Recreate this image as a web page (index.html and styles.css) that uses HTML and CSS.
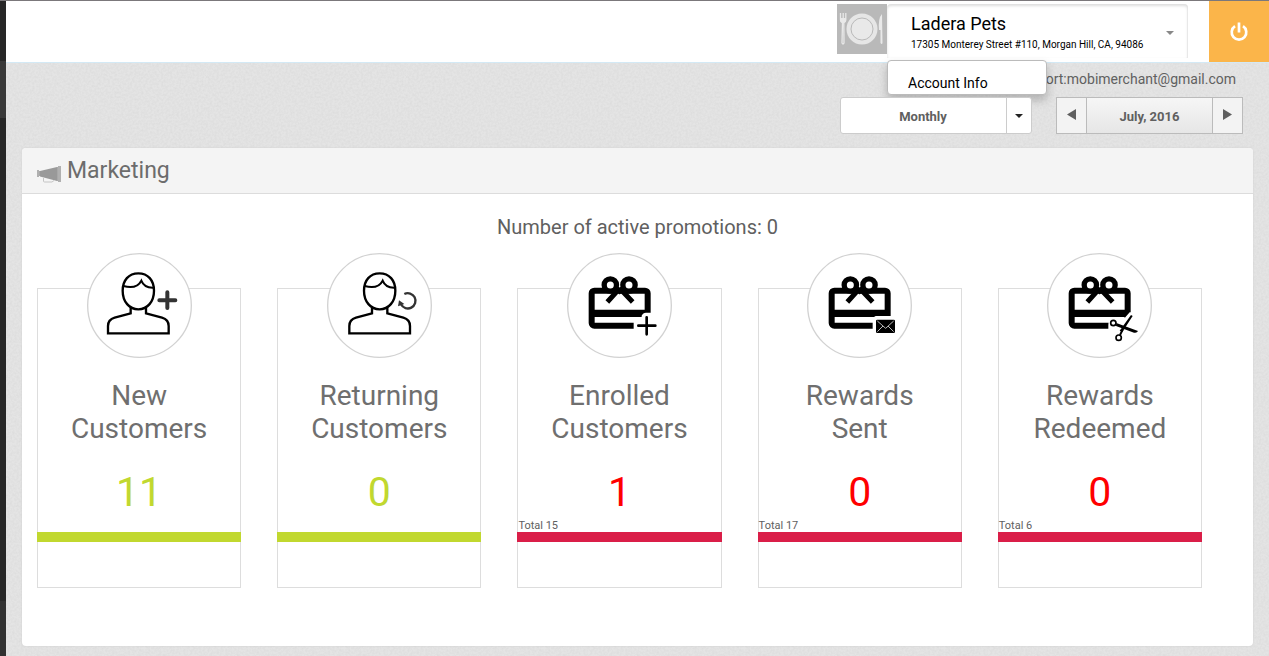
FILE: index.html
```html
<!DOCTYPE html>
<html lang="en">
<head>
<meta charset="utf-8">
<title>Ladera Pets - Marketing</title>
<link rel="stylesheet" href="styles.css">
</head>
<body>
<svg class="sprites" aria-hidden="true">
  <defs>
    <g id="ring"><circle cx="178.500" cy="181.500" r="155.500" fill="#fff" stroke="#d2d2d2" stroke-width="4"/></g>
    <g id="person" fill="none" stroke="#000" stroke-width="7">
      <path d="M175 85C146 85 128 106 128 137c0 33 20 56 47 56s47-23 47-56c0-31-18-52-47-52z"/>
      <path d="M130 123c21 6 43 5 54-16 5 13 17 22 37 21" stroke-width="6"/>
      <path d="M152 186v19l-48 13c-14 4-20 14-20 25v22h182v-22c0-11-6-21-20-25l-48-13v-19"/>
    </g>
    <g id="gift">
      <rect x="95" y="137" width="168" height="105" rx="8" fill="none" stroke="#000" stroke-width="18"/>
      <path d="M90 194h178v22H90z"/>
      <circle cx="151" cy="120" r="18.500" fill="#fff" stroke="#000" stroke-width="16"/>
      <circle cx="207" cy="120" r="18.500" fill="#fff" stroke="#000" stroke-width="16"/>
      <path d="M166 126l13 12 13-12M179 130l-37 41M179 130l39 41" fill="none" stroke="#000" stroke-width="15"/>
    </g>
  </defs>
</svg>
<div class="app">
  <aside class="rail"><div class="rail-active"></div><div class="rail-foot"></div></aside>
  <div class="page">
    <header class="topbar">
      <svg class="logo" viewBox="0 0 50 50" role="img" aria-label="Business logo">
        <rect width="50" height="50" fill="#b9b9b9"/>
        <circle cx="25" cy="25" r="15.500" fill="#e6e6e6"/>
        <circle cx="25" cy="25" r="11" fill="#e9e9e9" stroke="#b9b9b9"/>
        <path d="M3.500 9v7q0 2 2 2.500L5 39q1 2 2 0L6.800 18.500q2-.5 2-2.500V9M6.200 9v8" fill="none" stroke="#e9e9e9" stroke-width="1.300"/>
        <path d="M3 14h6v3l-2 2H5l-2-2zM45 10q-4 4-3 16h1.500v13q1.500 2 2 0z" fill="#e9e9e9"/>
      </svg>
      <div class="account">
        <button class="account-toggle" type="button" aria-haspopup="true" aria-expanded="true">
          <span class="account-text">
            <span class="account-name">Ladera Pets</span>
            <span class="account-address">17305 Monterey Street #110, Morgan Hill, CA, 94086</span>
          </span>
          <span class="caret caret-light"></span>
        </button>
        <nav class="account-menu"><a href="#account">Account Info</a></nav>
      </div>
      <button class="power" type="button" aria-label="Log out">
        <svg viewBox="0 0 20 20" width="20" height="20" fill="none" stroke="#fff" stroke-width="2.700">
          <path d="M6 4.200a7.300 7.300 0 1 0 8 0M10 .5v10"/>
        </svg>
      </button>
    </header>
    <main class="content">
      <p class="support">Support:<a href="mailto:mobimerchant@gmail.com">mobimerchant@gmail.com</a></p>
      <div class="filters">
        <div class="period">
          <select aria-label="Period"><option>Monthly</option><option>Weekly</option><option>Daily</option></select>
          <span class="period-arrow"><span class="caret"></span></span>
        </div>
        <div class="pager">
          <button type="button" aria-label="Previous month"><svg viewBox="0 0 9 11" width="9" height="11"><path d="M9 0v11L0 5.500z" fill="#5f5f5f"/></svg></button>
          <span class="pager-label">July, 2016</span>
          <button type="button" aria-label="Next month"><svg viewBox="0 0 9 11" width="9" height="11"><path d="M0 0v11l9-5.500z" fill="#5f5f5f"/></svg></button>
        </div>
      </div>
      <section class="panel">
        <div class="panel-head">
          <svg viewBox="0 0 24 18" width="24" height="18" aria-hidden="true">
            <path d="M3 6l17-4v14L3 11.500z" fill="#999"/>
            <path d="M0 5h2v7H0zM21 1h3v16h-3z" fill="#b0b0b0"/>
            <path d="M2 6h1v5H2zM20 2h1v14h-1z" fill="#a8a8a8"/>
            <path d="M6.500 13v3q0 1 1 1h7.500l2-1.500" fill="none" stroke="#c4c4c4"/>
          </svg>
          <h1>Marketing</h1>
        </div>
        <p class="promotions">Number of active promotions: 0</p>
        <div class="cards">
          <article class="card card-green">
            <svg class="badge" viewBox="21 24 315 315" aria-hidden="true"><use href="#ring"/><use href="#person"/>
              <path d="M262 142v47M238 165.500h48" stroke="#333" stroke-width="12" stroke-linecap="round"/></svg>
            <h2>New<br>Customers</h2>
            <p class="value">11</p>
            <p class="total"></p>
            <div class="bar"></div>
          </article>
          <article class="card card-green">
            <svg class="badge" viewBox="21 24 315 315" aria-hidden="true"><use href="#ring"/><use href="#person" x="4"/>
              <path d="M253 147a23 23 0 1 1-10 31" fill="none" stroke="#333" stroke-width="7"/><path d="M234 184l3-18 16 11z" fill="#333"/></svg>
            <h2>Returning<br>Customers</h2>
            <p class="value">0</p>
            <p class="total"></p>
            <div class="bar"></div>
          </article>
          <article class="card card-red">
            <svg class="badge" viewBox="21 24 315 315" aria-hidden="true"><use href="#ring"/><use href="#gift"/>
              <path d="M221 280v-60h24v-8q4-9 13-9h30v77z" fill="#fff"/>
              <path d="M260 217v51M235 242h51" stroke="#000" stroke-width="8" stroke-linecap="round"/></svg>
            <h2>Enrolled<br>Customers</h2>
            <p class="value">1</p>
            <p class="total">Total 15</p>
            <div class="bar"></div>
          </article>
          <article class="card card-red">
            <svg class="badge" viewBox="21 24 315 315" aria-hidden="true"><use href="#ring"/><use href="#gift"/>
              <path d="M218 270v-54h4l5-3h63v57z" fill="#fff"/>
              <rect x="228" y="224" width="57" height="40" rx="4"/>
              <path d="M232 228l25 22 24-22M232 260l17-17M281 260l-17-17" fill="none" stroke="#bbb" stroke-width="3"/></svg>
            <h2>Rewards<br>Sent</h2>
            <p class="value">0</p>
            <p class="total">Total 17</p>
            <div class="bar"></div>
          </article>
          <article class="card card-red">
            <svg class="badge" viewBox="21 24 315 315" aria-hidden="true"><use href="#ring"/><use href="#gift"/>
              <path d="M205 256v-15q-2-19 15-22h34l15-17h20v60z" fill="#fff"/>
              <path d="M273 210l5 3-31 48-8-4zM229 234l65 24q-3 7-12 5l-54-20z"/>
              <circle cx="220" cy="234" r="8" fill="#fff" stroke="#000" stroke-width="5"/>
              <circle cx="236" cy="278" r="8" fill="#fff" stroke="#000" stroke-width="5"/>
              <path d="M240 270l8-16" stroke="#000" stroke-width="6"/></svg>
            <h2>Rewards<br>Redeemed</h2>
            <p class="value">0</p>
            <p class="total">Total 6</p>
            <div class="bar"></div>
          </article>
        </div>
      </section>
    </main>
  </div>
</div>
</body>
</html>
```

FILE: styles.css
```css
* { box-sizing: border-box; }
body {
  margin: 0;
  font-family: Roboto, "Liberation Sans", sans-serif;
  font-size: 14px;
  color: #606060;
}
h1, h2, p { margin: 0; font-weight: 400; }
button { padding: 0; border: 0; font: inherit; color: inherit; cursor: pointer; }
a { color: inherit; text-decoration: none; }
.sprites { position: absolute; width: 0; height: 0; }

.app { display: flex; min-height: 100vh; border-top: 1px solid #7b787b; }
.rail { display: flex; flex-direction: column; justify-content: space-between; width: 6px; padding-top: 60px; background: #272727; }
.rail-active { height: 57px; background: #393939; }
.rail-foot { height: 55px; background: #313131; }
.page {
  flex: 1;
  background-color: #e4e4e4;
  background-image: url("data:image/svg+xml,%3Csvg xmlns='http://www.w3.org/2000/svg' width='200' height='200'%3E%3Cfilter id='n'%3E%3CfeTurbulence type='fractalNoise' baseFrequency='.45' numOctaves='2' stitchTiles='stitch'/%3E%3CfeColorMatrix values='0 0 0 0 0 0 0 0 0 0 0 0 0 0 0 .07 0 0 0 -.025'/%3E%3C/filter%3E%3Crect width='200' height='200' filter='url(%23n)'/%3E%3C/svg%3E");
}

.topbar { display: flex; justify-content: flex-end; background: #fff; border-bottom: 1px solid #d3e9f5; }
.logo { width: 50px; height: 50px; margin-top: 3px; }
.account { position: relative; width: 301px; margin: 3px 21px 4px 0; }
.account-toggle {
  display: flex;
  align-items: center;
  justify-content: space-between;
  width: 100%;
  height: 54px;
  padding: 3px 14px 0 24px;
  background: #fff;
  border-radius: 4px 4px 0 0;
  box-shadow: inset 0 2px 3px #ddd, inset -1px 0 1px #eee;
  color: #000;
  text-align: left;
}
.account-text { display: flex; flex-direction: column; }
.account-name { font-size: 18px; line-height: 24px; }
.account-address { font-size: 10px; line-height: 17px; }
.caret { display: block; border: 4px solid transparent; border-top-color: #222; border-bottom: 0; }
.caret-light { border-top-color: #888; }
.account-menu {
  position: absolute;
  top: 56px;
  left: 0;
  width: 160px;
  padding: 13px 20px 1px;
  background: #fff;
  border: 1px solid #bbb;
  border-radius: 4px;
  box-shadow: 0 5px 10px rgba(0, 0, 0, .22);
  line-height: 19px;
  color: #000;
}
.power { display: flex; align-items: center; justify-content: center; width: 60px; height: 61px; background: #fbb54a; }

.content { padding: 7px 16px 10px; }
.support { padding-right: 17px; line-height: 18px; text-align: right; }
.filters { display: flex; justify-content: flex-end; gap: 24px; padding: 9px 10px 14px 0; font-size: 13px; font-weight: 700; }
.period { position: relative; width: 192px; height: 37px; }
.period select {
  width: 100%;
  height: 100%;
  padding: 2px 26px 0 0;
  appearance: none;
  background: #fff;
  border: 1px solid #ccc;
  border-radius: 3px;
  font: inherit;
  color: inherit;
  text-align-last: center;
}
.period-arrow {
  position: absolute;
  inset: 1px 1px 1px auto;
  display: flex;
  align-items: center;
  justify-content: center;
  width: 25px;
  border-left: 1px solid #ccc;
  pointer-events: none;
}
.pager { display: flex; width: 187px; height: 37px; background: linear-gradient(#f6f6f6, #e6e6e6); border: 1px solid #bbb; }
.pager button { width: 29px; background: #f3f3f3; }
.pager-label { flex: 1; border: solid #bbb; border-width: 0 1px; line-height: 37px; text-align: center; }

.panel { padding-bottom: 58px; background: #fff; border-radius: 4px; box-shadow: 0 0 2px #ccc; }
.panel-head {
  display: flex;
  align-items: center;
  gap: 6px;
  height: 46px;
  padding-left: 15px;
  background: #f4f4f4;
  border-bottom: 1px solid #dcdcdc;
  border-radius: 4px 4px 0 0;
  color: #6c6c6c;
}
.panel-head svg { margin-top: 6px; }
.panel-head h1 { font-size: 23px; line-height: 45px; }
.promotions { padding: 20px 0 48px; font-size: 20px; line-height: 26px; text-align: center; }
.cards { display: grid; grid-template-columns: repeat(5, 1fr); gap: 36px; padding: 0 51px 0 15px; }
.card { height: 300px; border: 1px solid #ddd; text-align: center; }
.badge { display: block; width: 105px; height: 105px; margin: -36px auto 21px; }
.card h2 { font-size: 28px; line-height: 33px; color: #6f6f6f; }
.value { padding-top: 23px; font-size: 41px; line-height: 48px; }
.total { height: 16px; font-size: 11px; line-height: 20px; text-align: left; }
.bar { height: 10px; margin: 0 -1px; }
.card-green .value { color: #c1d82f; }
.card-green .bar { background: #c1d82f; }
.card-red .value { color: #f00; }
.card-red .bar { background: #da1e48; }
```
